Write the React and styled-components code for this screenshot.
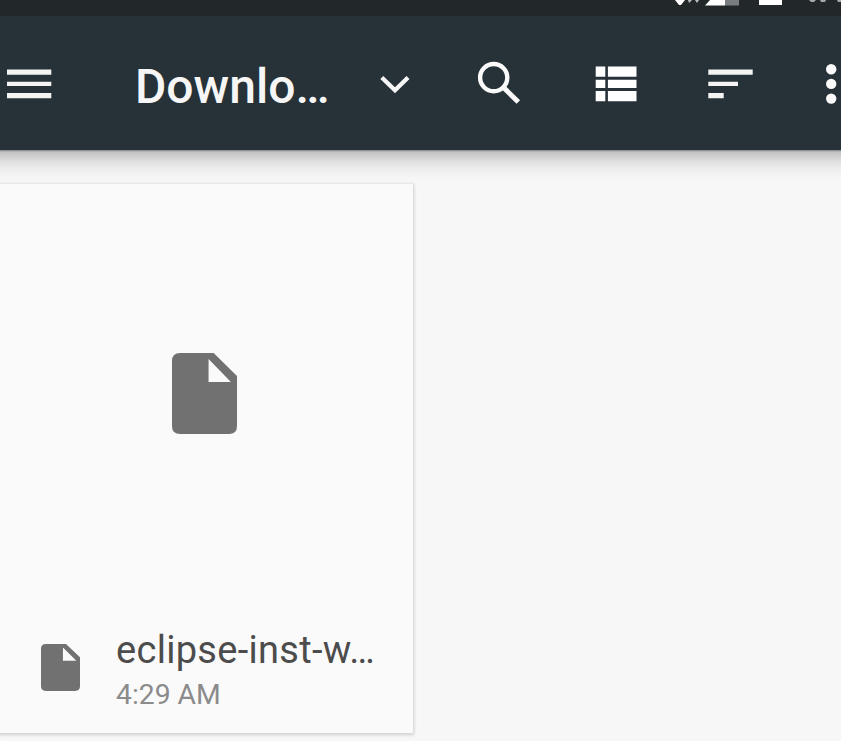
import React from "react";
import styled, { createGlobalStyle } from "styled-components";

const GlobalStyle = createGlobalStyle`
  * { box-sizing: border-box; }
  html, body { margin: 0; background: #f7f7f7; overflow: hidden; }
  body { font-family: Roboto, "Liberation Sans", sans-serif; }
  svg { display: block; flex: none; }
`;

const Screen = styled.div`
  width: 841px;
  height: 741px;
  overflow: hidden;
  display: flex;
  flex-direction: column;
  background: #f7f7f7;
`;

const StatusBar = styled.div`
  height: 16px;
  flex: none;
  display: flex;
  justify-content: flex-end;
  background: #22272a;
`;

const Toolbar = styled.header`
  height: 134px;
  flex: none;
  display: flex;
  align-items: flex-start;
  padding: 40px 0 0 0;
  background: #273238;
`;

const IconButton = styled.button`
  all: unset;
  flex: none;
  width: ${({ $width }) => $width}px;
  margin-left: ${({ $gap }) => $gap}px;
`;

const Title = styled.h1`
  flex: none;
  width: 198px;
  margin: 1px 0 0 79px;
  white-space: nowrap;
  font-size: 48px;
  line-height: 60px;
  font-weight: 500;
  color: #f6f6f6;
`;

const Content = styled.main`
  flex: 1;
  padding-top: 34px;
  background: linear-gradient(#7d8285 0, #c3c3c3 2px, #cecece 6px, #dedede 11px, #ececec 18px, #f4f4f4 26px, #f7f7f7 32px);
`;

const FileCard = styled.article`
  width: 413px;
  height: 549px;
  display: flex;
  flex-direction: column;
  background: #fafafa;
  box-shadow: 0 1px 3px 1px rgba(0, 0, 0, 0.16);
`;

const Preview = styled.div`
  height: 417px;
  padding: 169px 0 0 172px;
`;

const Details = styled.div`
  display: flex;
  padding-left: 41px;
  padding-top: 43px;
`;

const Caption = styled.div`
  margin: -16px 0 0 36px;
  white-space: nowrap;
`;

const FileName = styled.div`
  font-size: 38px;
  letter-spacing: 0.3px;
  line-height: 44px;
  color: #4c4c4c;
`;

const FileTime = styled.div`
  font-size: 28.3px;
  line-height: 44px;
  padding-top: 1px;
  color: #8b8b8b;
`;

const FileIcon = ({ width, height }) => (
  <svg width={width} height={height} viewBox="0 0 64 81" preserveAspectRatio="none" fill="#717171">
    <path fillRule="evenodd" d="M8 0H41L64 23V73Q64 81 56 81H8Q0 81 0 73V8Q0 0 8 0ZM36 6V29H58Z" />
  </svg>
);

export default function App() {
  return (
    <>
      <GlobalStyle />
      <Screen>
        <StatusBar>
          <svg width="171" height="8" viewBox="670 0 171 8" fill="#fff">
            <path d="M675 0H685L681 5H679Z" />
            <path d="M688 0H692L689 3ZM695 0H699L697 3Z" opacity=".7" />
            <path d="M710 0H725V5.5H705Z" />
            <path d="M725 0H739V5.5H725Z" opacity=".4" />
            <path d="M759 0H782V5H759Z" />
            <path d="M809 0H816L814 2H811ZM820 0H826L825 2H821ZM837 0H841V2H838Z" opacity=".6" />
          </svg>
        </StatusBar>
        <Toolbar>
          <IconButton $width={50} $gap={6} aria-label="Menu">
            <svg width="50" height="60" viewBox="6 56 50 60" fill="#f4f4f4">
              <path d="M7 69.4H51.3V74.7H7ZM7 81.7H51.3V86H7ZM7 93H51.3V98.3H7Z" />
            </svg>
          </IconButton>
          <Title>Downlo…</Title>
          <IconButton $width={40} $gap={42} aria-label="Choose folder">
            <svg width="40" height="60" viewBox="375 56 40 60" fill="none" stroke="#f6f6f6" strokeWidth="4.3">
              <path d="M381.8 77.5L395 90.3L408 77.5" />
            </svg>
          </IconButton>
          <IconButton $width={50} $gap={60} aria-label="Search">
            <svg width="50" height="60" viewBox="475 56 50 60" fill="none" stroke="#fafafa">
              <circle cx="493.7" cy="77.6" r="13.6" strokeWidth="4.4" />
              <path d="M503 87L518.3 102" strokeWidth="5" />
            </svg>
          </IconButton>
          <IconButton $width={50} $gap={67} aria-label="List view">
            <svg width="50" height="60" viewBox="592 56 50 60" fill="#fff">
              <path d="M595.7 66.5H605.3V76.8H595.7ZM607.9 66.5H636.5V76.8H607.9ZM595.7 79.8H605.3V88.1H595.7ZM607.9 79.8H636.5V88.1H607.9ZM595.7 91H605.3V101.3H595.7ZM607.9 91H636.5V101.3H607.9Z" />
            </svg>
          </IconButton>
          <IconButton $width={50} $gap={63} aria-label="Sort">
            <svg width="50" height="60" viewBox="705 56 50 60" fill="#f4f4f4">
              <path d="M708.3 69.4H752.7V74.7H708.3ZM708.3 81.7H738V86H708.3ZM708.3 93H723.7V98.3H708.3Z" />
            </svg>
          </IconButton>
          <IconButton $width={20} $gap={66} aria-label="More options">
            <svg width="20" height="60" viewBox="821 56 20 60" fill="#fafafa">
              <circle cx="831.2" cy="69.3" r="5.2" />
              <circle cx="831.2" cy="83.9" r="5.2" />
              <circle cx="831.2" cy="98.6" r="5.2" />
            </svg>
          </IconButton>
        </Toolbar>
        <Content>
          <FileCard>
            <Preview>
              <FileIcon width={65} height={81} />
            </Preview>
            <Details>
              <FileIcon width={39} height={47} />
              <Caption>
                <FileName>eclipse-inst-w…</FileName>
                <FileTime>4:29 AM</FileTime>
              </Caption>
            </Details>
          </FileCard>
        </Content>
      </Screen>
    </>
  );
}
